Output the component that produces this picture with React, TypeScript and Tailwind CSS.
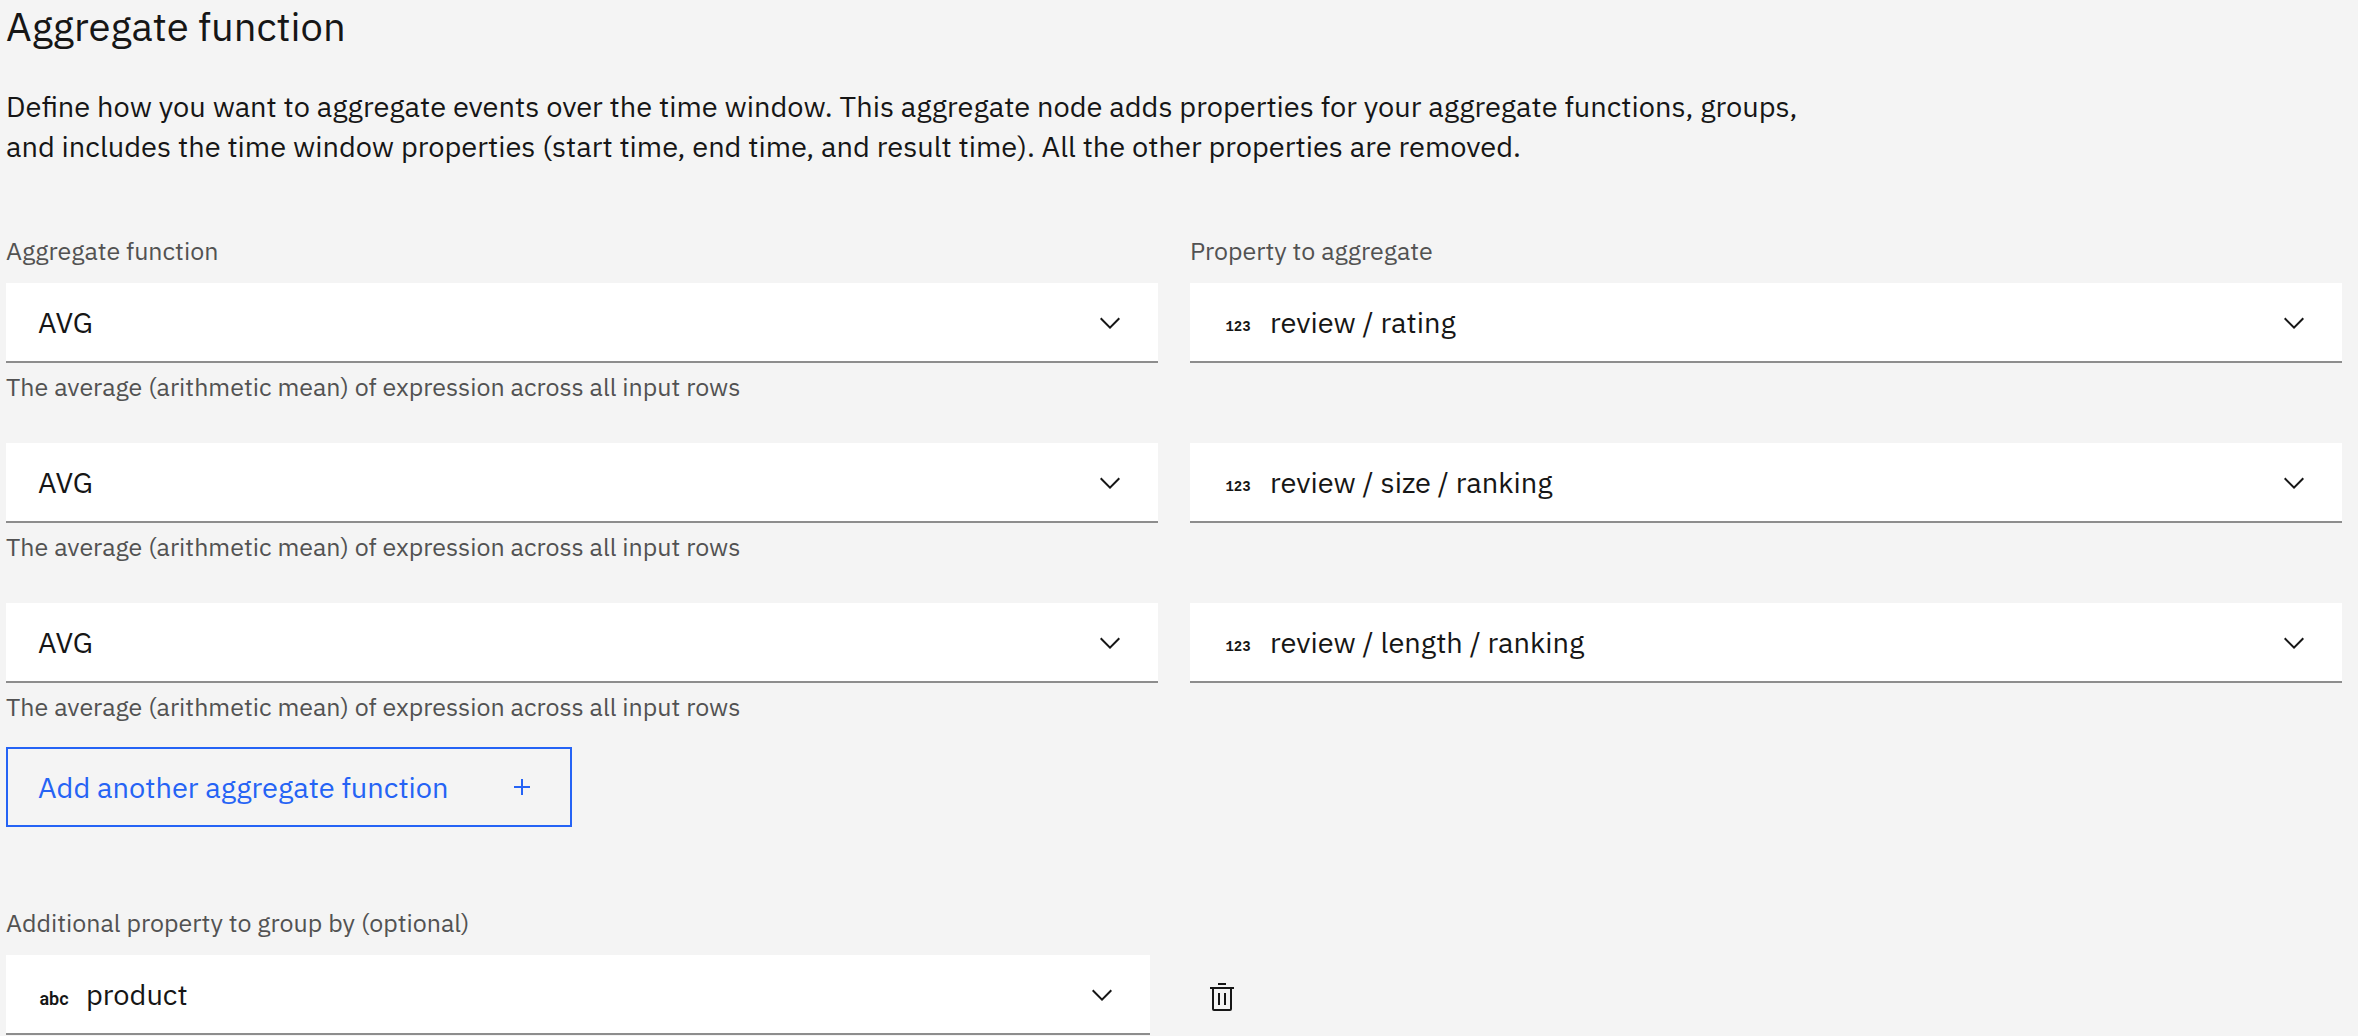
import { useId, useState } from 'react';

type Kind = 'number' | 'string';

function ChevronDown() {
  return (
    <svg
      viewBox="0 0 16 16"
      aria-hidden="true"
      className="pointer-events-none absolute top-6 right-8 size-8 fill-[#161616]"
    >
      <path d="M8 11 3 6l.7-.7L8 9.6l4.3-4.3.7.7z" />
    </svg>
  );
}

function TypeBadge({ kind }: { kind: Kind }) {
  return kind === 'number' ? (
    <span
      aria-hidden="true"
      className="pointer-events-none absolute top-8 left-8 w-8 text-center font-['Liberation_Mono',monospace] text-[14px] leading-6 font-bold text-[#161616]"
    >
      123
    </span>
  ) : (
    <span
      aria-hidden="true"
      className="pointer-events-none absolute top-8 left-8 w-8 text-center font-['Roboto',sans-serif] text-[18px] leading-6 font-semibold text-[#161616]"
    >
      abc
    </span>
  );
}

interface DropdownProps {
  label: string;
  showLabel?: boolean;
  options: string[];
  initial: string;
  kind?: Kind;
  helper?: string;
}

function Dropdown({ label, showLabel = false, options, initial, kind, helper }: DropdownProps) {
  const id = useId();
  const [value, setValue] = useState(initial);
  return (
    <div className="min-w-0">
      {showLabel && (
        <label htmlFor={id} className="mb-4 block text-[25px] leading-8 text-[#525252]">
          {label}
        </label>
      )}
      <div className="relative">
        <select
          id={id}
          aria-label={showLabel ? undefined : label}
          value={value}
          onChange={(e) => setValue(e.target.value)}
          className={`block h-20 w-full appearance-none rounded-none border-b-2 border-[#8d8d8d] bg-white pr-20 text-[29px] leading-10 text-[#161616] outline-offset-[-4px] outline-[#0f62fe] ${
            kind ? 'pl-20' : 'pl-8'
          }`}
        >
          {options.map((o) => (
            <option key={o}>{o}</option>
          ))}
        </select>
        {kind && <TypeBadge kind={kind} />}
        <ChevronDown />
      </div>
      {helper && <p className="mt-2 text-[25px] leading-8 text-[#525252]">{helper}</p>}
    </div>
  );
}

const functions = ['AVG', 'COUNT', 'MAX', 'MIN', 'SUM'];
const properties = ['review / rating', 'review / size / ranking', 'review / length / ranking'];

export default function App() {
  return (
    <main className="min-h-screen bg-[#f4f4f4] pr-4 pl-1.5 font-['IBM_Plex_Sans','Roboto',sans-serif] text-[#161616]">
      <h1 className="text-[40px] leading-[52px] font-normal">Aggregate function</h1>
      <p className="mt-[34px] max-w-[1800px] text-[29px] leading-10">
        Define how you want to aggregate events over the time window. This aggregate node adds
        properties for your aggregate functions, groups, and includes the time window properties
        (start time, end time, and result time). All the other properties are removed.
      </p>

      <section className="mt-[69px] flex flex-col gap-10">
        {properties.map((property, i) => (
          <div key={property} className="grid grid-cols-2 gap-8">
            <Dropdown
              label="Aggregate function"
              showLabel={i === 0}
              options={functions}
              initial="AVG"
              helper="The average (arithmetic mean) of expression across all input rows"
            />
            <Dropdown
              label="Property to aggregate"
              showLabel={i === 0}
              options={properties}
              initial={property}
              kind="number"
            />
          </div>
        ))}
      </section>

      <button
        type="button"
        className="mt-6 flex h-20 w-[566px] items-center justify-between border-2 border-[#2563f5] pr-8 pl-[30px] text-[29px] leading-10 text-[#2563f5]"
      >
        Add another aggregate function
        <svg viewBox="0 0 32 32" aria-hidden="true" className="size-8 fill-current">
          <path d="M17 15V8h-2v7H8v2h7v7h2v-7h7v-2z" />
        </svg>
      </button>

      <section className="mt-20 grid grid-cols-2 items-end gap-8">
        <div className="pr-2">
          <Dropdown
            label="Additional property to group by (optional)"
            showLabel
            options={['product']}
            initial="product"
            kind="string"
          />
        </div>
        <button
          type="button"
          aria-label="Remove property"
          className="flex h-[76px] w-16 items-center justify-center"
        >
          <svg viewBox="0 0 32 32" aria-hidden="true" className="size-8 fill-[#161616]">
            <path d="M12 12h2v12h-2zM18 12h2v12h-2z" />
            <path d="M4 6v2h2v20a2 2 0 0 0 2 2h16a2 2 0 0 0 2-2V8h2V6zm4 22V8h16v20zM12 2h8v2h-8z" />
          </svg>
        </button>
      </section>
    </main>
  );
}
